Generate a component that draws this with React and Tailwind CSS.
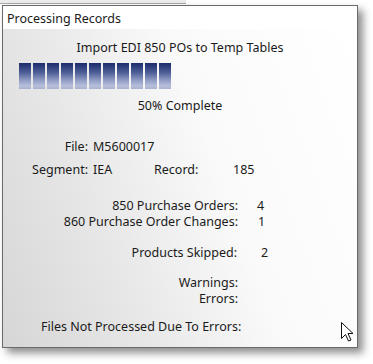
import React from "react";

function Block() {
  return (
    <div className="w-[12px] h-[26px] bg-[linear-gradient(to_bottom,#1c2c6c_0%,#4a5b95_35%,#8e99c2_65%,#b7bfda_88%,#a9b1cf_100%)]" />
  );
}

function Cursor() {
  return (
    <svg
      className="absolute left-[340px] top-[321px]"
      width="14"
      height="22"
      viewBox="0 0 14 22"
    >
      <path
        d="M1.5 1.5 L1.5 17.5 L5.5 13.5 L8.5 20 L11 19 L8 12.5 L13 12.5 Z"
        fill="#ffffff"
        stroke="#111111"
        strokeWidth="1"
        strokeLinejoin="miter"
      />
    </svg>
  );
}

export default function App() {
  const font = "font-['Noto_Sans','Open_Sans',sans-serif]";
  return (
    <div className={`relative w-[373px] h-[364px] bg-white overflow-hidden ${font} text-[12.5px] text-[#1a1a1a]`}>
      <div className="h-[4px] w-[186px] bg-[#ececec] border-b border-[#a8a8a8]" />
      <div className="pl-[2px] pt-[1px]">
        <div className="w-[356px] h-[343px] border border-[#6a6a6a] bg-white shadow-[5px_5px_8px_rgba(0,0,0,0.45)] flex flex-col">
          <div className="h-[23px] pl-[4px] pt-[5px] leading-[16px] bg-white">Processing Records</div>
          <div className="flex-1 flex flex-col bg-[linear-gradient(70deg,#d6d6d6_0%,#e7e7e7_30%,#fafafa_60%,#ffffff_100%)]">
            <div className="mt-[11px] h-[16px] leading-[16px] text-center">Import EDI 850 POs to Temp Tables</div>
            <div className="mt-[7px] ml-[16px] flex gap-[2px]">
              {Array.from({ length: 11 }).map((_, i) => (
                <Block key={i} />
              ))}
            </div>
            <div className="mt-[9px] h-[16px] leading-[16px] text-center">50% Complete</div>

            <div className="mt-[25px] h-[16px] leading-[16px] flex">
              <div className="w-[85px] text-right">File:</div>
              <div className="ml-[5px]">M5600017</div>
            </div>
            <div className="mt-[7px] h-[16px] leading-[16px] flex">
              <div className="w-[85px] text-right">Segment:</div>
              <div className="ml-[5px] w-[61px]">IEA</div>
              <div className="w-[79px]">Record:</div>
              <div>185</div>
            </div>

            <div className="mt-[20px] h-[16px] leading-[16px] flex">
              <div className="w-[235px] text-right">850 Purchase Orders:</div>
              <div className="ml-[19px]">4</div>
            </div>
            <div className="h-[16px] leading-[16px] flex">
              <div className="w-[235px] text-right">860 Purchase Order Changes:</div>
              <div className="ml-[20px]">1</div>
            </div>

            <div className="mt-[15px] h-[16px] leading-[16px] flex">
              <div className="w-[234px] text-right">Products Skipped:</div>
              <div className="ml-[24px]">2</div>
            </div>

            <div className="mt-[14px] h-[16px] leading-[16px] flex">
              <div className="w-[235px] text-right">Warnings:</div>
            </div>
            <div className="h-[16px] leading-[16px] flex">
              <div className="w-[235px] text-right">Errors:</div>
            </div>

            <div className="mt-[12px] h-[16px] leading-[16px] pl-[38px]">Files Not Processed Due To Errors:</div>
          </div>
        </div>
      </div>
      <Cursor />
    </div>
  );
}
